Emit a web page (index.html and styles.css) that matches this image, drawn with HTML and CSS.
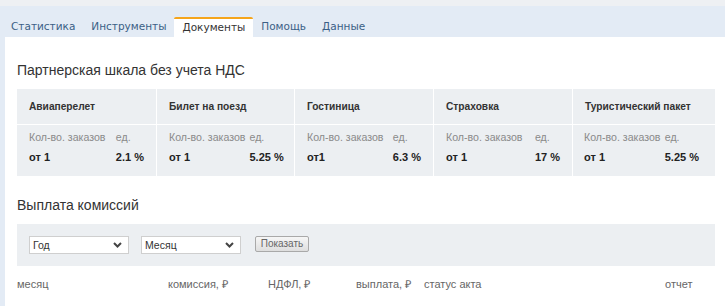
FILE: index.html
```html
<!DOCTYPE html>
<html lang="ru">
<head>
<meta charset="utf-8">
<link rel="stylesheet" href="styles.css">
</head>
<body>
<div class="topbar"></div>
<div class="frame">
  <nav class="tabs">
    <a class="tab">Статистика</a>
    <a class="tab">Инструменты</a>
    <a class="tab active">Документы</a>
    <a class="tab">Помощь</a>
    <a class="tab">Данные</a>
  </nav>
  <main class="content">
    <h2 class="title">Партнерская шкала без учета НДС</h2>
    <div class="scale">
      <div class="col">
        <div class="col-head">Авиаперелет</div>
        <div class="col-body">
          <div class="pair"><span class="lbl">Кол-во. заказов</span><span class="val">от 1</span></div>
          <div class="pair right"><span class="lbl">ед.</span><span class="val">2.1 %</span></div>
        </div>
      </div>
      <div class="col">
        <div class="col-head">Билет на поезд</div>
        <div class="col-body">
          <div class="pair"><span class="lbl">Кол-во. заказов</span><span class="val">от 1</span></div>
          <div class="pair right"><span class="lbl">ед.</span><span class="val">5.25 %</span></div>
        </div>
      </div>
      <div class="col">
        <div class="col-head">Гостиница</div>
        <div class="col-body">
          <div class="pair"><span class="lbl">Кол-во. заказов</span><span class="val">от1</span></div>
          <div class="pair right"><span class="lbl">ед.</span><span class="val">6.3 %</span></div>
        </div>
      </div>
      <div class="col">
        <div class="col-head">Страховка</div>
        <div class="col-body">
          <div class="pair"><span class="lbl">Кол-во. заказов</span><span class="val">от 1</span></div>
          <div class="pair right"><span class="lbl">ед.</span><span class="val">17 %</span></div>
        </div>
      </div>
      <div class="col col-last">
        <div class="col-head">Туристический пакет</div>
        <div class="col-body">
          <div class="pair"><span class="lbl">Кол-во. заказов</span><span class="val">от 1</span></div>
          <div class="pair right"><span class="lbl">ед.</span><span class="val">5.25 %</span></div>
        </div>
      </div>
    </div>

    <h2 class="title title2">Выплата комиссий</h2>
    <div class="filter">
      <div class="select"><span>Год</span><svg class="chev" width="9" height="6" viewBox="0 0 9 6"><polyline points="1,1 4.5,4.5 8,1" fill="none" stroke="#444" stroke-width="2"/></svg></div>
      <div class="select"><span>Месяц</span><svg class="chev" width="9" height="6" viewBox="0 0 9 6"><polyline points="1,1 4.5,4.5 8,1" fill="none" stroke="#444" stroke-width="2"/></svg></div>
      <button class="btn">Показать</button>
    </div>
    <div class="cols">
      <span>месяц</span>
      <span>комиссия, ₽</span>
      <span>НДФЛ, ₽</span>
      <span>выплата, ₽</span>
      <span>статус акта</span>
      <span>отчет</span>
    </div>
  </main>
</div>
</body>
</html>
```
FILE: styles.css
```css
html, body {
  margin: 0;
  padding: 0;
  background: #fff;
}
body {
  font-family: "Liberation Sans", Arial, sans-serif;
  width: 725px;
  height: 306px;
  overflow: hidden;
}
.topbar {
  height: 6px;
  background: #eef0f3;
}
.frame {
  background: #e3ebf5;
  padding-left: 5px;
  height: 300px;
}
.tabs {
  display: flex;
  align-items: flex-end;
  height: 31px;
}
.tab {
  font-family: "DejaVu Sans", Verdana, sans-serif;
  font-size: 10.5px;
  color: #3b5f86;
  padding: 0 8px;
  height: 20px;
  line-height: 19px;
  box-sizing: border-box;
}
.tab:first-child {
  padding-left: 6px;
}
.tab.active {
  background: #fff;
  color: #333;
  border-top: 2px solid #f5a51c;
  line-height: 17px;
  border-radius: 2px 2px 0 0;
}
.content {
  background: #fff;
  padding: 24px 10px 0 12px;
  height: 269px;
  box-sizing: border-box;
}
.title {
  margin: 0;
  font-size: 14px;
  font-weight: normal;
  line-height: 19px;
  color: #333;
}
.scale {
  margin-top: 9px;
  display: grid;
  grid-template-columns: 139px 137px 138px 138px 1fr;
  column-gap: 1px;
  background: #fff;
}
.col {
  background: #eceff2;
}
.col-head {
  height: 35px;
  line-height: 35px;
  padding: 0 12px;
  font-size: 10.2px;
  font-weight: bold;
  color: #333;
  border-bottom: 1px solid #fff;
  white-space: nowrap;
}
.col-body {
  display: flex;
  justify-content: space-between;
  gap: 4px;
  padding: 5px 12px 12px 12px;
}
.col-last .col-body {
  padding-left: 11px;
  padding-right: 16px;
}
.pair {
  display: flex;
  flex-direction: column;
  gap: 6px;
}
.pair.right .val {
  text-align: right;
}
.lbl {
  font-size: 10.6px;
  line-height: 14px;
  color: #8a8a8a;
  white-space: nowrap;
}
.val {
  font-size: 11px;
  line-height: 14px;
  font-weight: bold;
  color: #222;
  white-space: nowrap;
}
.title2 {
  margin-top: 20px;
}
.filter {
  margin-top: 9px;
  height: 42px;
  box-sizing: border-box;
  background: #eceff2;
  display: flex;
  align-items: flex-start;
  padding: 12px 12px 0 12px;
}
.select {
  width: 100px;
  height: 18px;
  box-sizing: border-box;
  border: 1px solid #cfcfcf;
  background: #fff;
  display: flex;
  align-items: center;
  justify-content: space-between;
  padding: 0 6px 0 3px;
  margin-right: 12px;
  font-family: "Liberation Sans", Arial, sans-serif;
  font-size: 10.5px;
  color: #333;
}
.chev {
  display: block;
}
.btn {
  margin-left: 2px;
  height: 16px;
  width: 54px;
  padding: 0;
  border: 1px solid #a9a9a9;
  border-radius: 2px;
  background: linear-gradient(#f6f6f6, #dedede);
  font-family: "Liberation Sans", Arial, sans-serif;
  font-size: 10px;
  color: #666;
  line-height: 14px;
}
.cols {
  margin-top: 11px;
  display: grid;
  grid-template-columns: 151px 100px 88px 68px 241px auto;
  font-size: 11px;
  line-height: 14px;
  color: #666;
}
```
